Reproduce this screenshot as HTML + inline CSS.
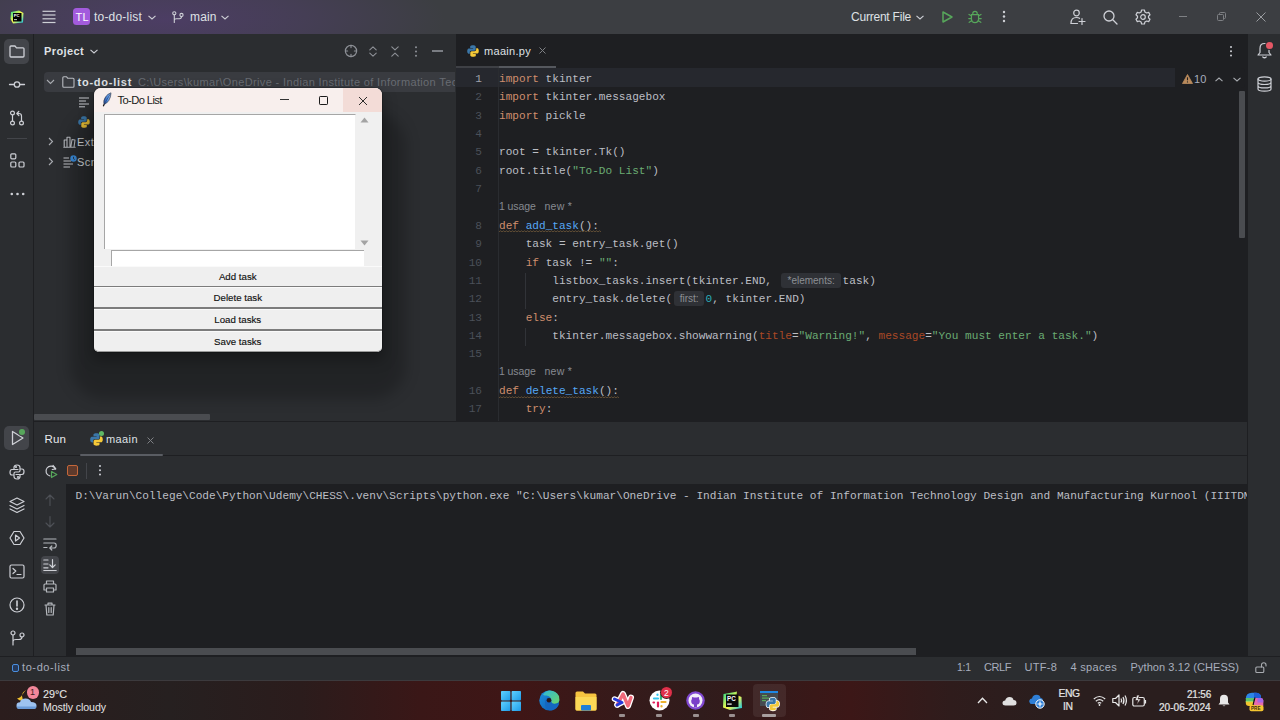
<!DOCTYPE html>
<html><head><meta charset="utf-8">
<style>
*{margin:0;padding:0;box-sizing:border-box}
html,body{width:1280px;height:720px;overflow:hidden;background:#2B2D30;font-family:"Liberation Sans",sans-serif;}
.a{position:absolute}
.t{position:absolute;white-space:pre;line-height:1}
svg{position:absolute;overflow:visible}
.ic{fill:none;stroke:#CED0D6;stroke-width:1.1;stroke-linecap:round;stroke-linejoin:round}
#titlebar{left:0;top:0;width:1280px;height:34px;background:#3C3E42}
#lstrip{left:0;top:34px;width:34px;height:622px;background:#2B2D30;border-right:1px solid #1E1F22}
#proj{left:34px;top:34px;width:422px;height:387px;background:#2B2D30}
#editor{left:456px;top:34px;width:791px;height:387px;background:#1E1F22}
#rstrip{left:1247px;top:34px;width:33px;height:622px;background:#2B2D30;border-left:1px solid #1E1F22}
#run{left:34px;top:421px;width:1213px;height:235px;background:#2B2D30;border-top:1px solid #1E1F22}
#status{left:0;top:656px;width:1280px;height:24px;background:#2B2D30;border-top:1px solid #1E1F22}
#taskbar{left:0;top:680px;width:1280px;height:40px;background:linear-gradient(90deg,#2B1D1D 0px,#262020 170px,#2B1C1C 300px,#3A1717 420px,#3F1616 520px,#361A1A 620px,#301C1C 700px,#361919 780px,#3C1717 850px,#2F1C1C 950px,#2A1E1E 1050px,#2A1E1E 1280px)}
.code{position:absolute;left:499px;font-family:"Liberation Mono",monospace;font-size:11.1px;line-height:1;color:#BCBEC4;white-space:pre}
.kw{color:#CF8E6D}.str{color:#6AAB73}.fn{color:#56A8F5}.num{color:#2AACB8}.arg{color:#AA4926}
.ln{position:absolute;font-family:"Liberation Mono",monospace;font-size:11.1px;line-height:1;color:#4B5059;text-align:right;width:40px;left:442px}
.lens{position:absolute;left:499px;font-size:10.5px;line-height:1;color:#868A91;white-space:pre}
.hint{display:inline-block;font-family:"Liberation Sans",sans-serif;font-size:10px;color:#8C8F94;background:#2F3136;border-radius:3px;text-align:center;vertical-align:top;height:15px;line-height:15px;position:relative;top:-3px}
.ui{color:#DFE1E5}
.btn{position:absolute;left:94px;width:287.5px;background:#EFEFEF;font-size:9.7px;color:#111;-webkit-text-stroke:0.15px #111;text-align:center;line-height:20px;border-top:1px solid #FAFAFA}
.tb{position:absolute;font-size:10.5px;color:#E4E4E4;white-space:pre;line-height:1;-webkit-text-stroke:0.2px #E4E4E4}
</style></head><body>
<div id="titlebar" class="a"></div>
<div class="a" style="left:0;top:0;width:600px;height:34px;background:radial-gradient(ellipse 280px 70px at 165px 20px,rgba(100,60,150,0.40) 0%,rgba(95,62,140,0.26) 50%,rgba(60,63,65,0) 100%)"></div>
<div id="lstrip" class="a"></div>
<div id="proj" class="a"></div>
<div id="editor" class="a"></div>
<div id="rstrip" class="a"></div>
<div id="run" class="a"></div>
<div id="status" class="a"></div>
<div id="taskbar" class="a"></div>
<!-- ===== title bar ===== -->
<svg style="left:10px;top:10px" width="14" height="14" viewBox="0 0 14 14">
  <defs><linearGradient id="pcg" x1="0" y1="0" x2="1" y2="1"><stop offset="0" stop-color="#21D789"/><stop offset="0.5" stop-color="#FCF84A"/><stop offset="1" stop-color="#07C3F2"/></linearGradient></defs>
  <path d="M1 2 L9 0.5 L13.5 3 L13 12.5 L3 13.5 L0.5 9 Z" fill="url(#pcg)"/>
  <rect x="3" y="3" width="8.5" height="8.5" fill="#000"/>
  <text x="3.8" y="7.3" font-size="4.2" font-weight="bold" fill="#fff" font-family="Liberation Sans">PC</text>
  <rect x="4" y="9.3" width="3" height="0.8" fill="#fff"/>
</svg>
<svg style="left:42px;top:10px" width="14" height="14" viewBox="0 0 14 14"><g stroke="#CED0D6" stroke-width="1.2"><line x1="0.5" y1="1.3" x2="13.5" y2="1.3"/><line x1="0.5" y1="5" x2="13.5" y2="5"/><line x1="0.5" y1="8.8" x2="13.5" y2="8.8"/><line x1="0.5" y1="12.5" x2="13.5" y2="12.5"/></g></svg>
<div class="a" style="left:73px;top:8px;width:17px;height:17px;background:#A35BDD;border-radius:3.5px"></div>
<div class="t" style="left:75.5px;top:12px;font-size:11px;color:#fff;letter-spacing:0.2px">TL</div>
<div class="t ui" style="left:94px;top:11.3px;font-size:12px;letter-spacing:0.2px">to-do-list</div>
<svg style="left:148px;top:15px" width="8" height="5" viewBox="0 0 8 5"><path d="M0.5 0.8 L4 4 L7.5 0.8" fill="none" stroke="#CED0D6" stroke-width="1.1"/></svg>
<svg style="left:172px;top:11px" width="12" height="12" viewBox="0 0 12 12" class="ic"><circle cx="2.3" cy="2.3" r="1.6"/><circle cx="9.5" cy="4" r="1.6"/><path d="M2.3 3.9 V11.5 M2.3 9 Q2.3 7.8 4.3 7.8 L7.5 7.8 Q9.5 7.8 9.5 5.6"/></svg>
<div class="t ui" style="left:190px;top:11.3px;font-size:12px;letter-spacing:0.15px">main</div>
<svg style="left:221px;top:15px" width="8" height="5" viewBox="0 0 8 5"><path d="M0.5 0.8 L4 4 L7.5 0.8" fill="none" stroke="#CED0D6" stroke-width="1.1"/></svg>

<div class="t ui" style="left:851px;top:11.3px;font-size:12px;letter-spacing:-0.22px">Current File</div>
<svg style="left:916px;top:15px" width="8" height="5" viewBox="0 0 8 5"><path d="M0.5 0.8 L4 4 L7.5 0.8" fill="none" stroke="#CED0D6" stroke-width="1.1"/></svg>
<svg style="left:942px;top:11px" width="11" height="12" viewBox="0 0 11 12"><path d="M1 1 L10 6 L1 11 Z" fill="none" stroke="#57A65B" stroke-width="1.5" stroke-linejoin="round"/></svg>
<svg style="left:968px;top:10px" width="14" height="14" viewBox="0 0 14 14"><g fill="none" stroke="#57A65B" stroke-width="1.25" stroke-linecap="round"><path d="M4.8 3.5 Q4.8 1.3 7 1.3 Q9.2 1.3 9.2 3.5"/><path d="M3.6 4.5 H10.4 Q10.6 6 10.6 8.5 Q10.6 12.6 7 12.6 Q3.4 12.6 3.4 8.5 Q3.4 6 3.6 4.5 Z"/><path d="M1 4.5 L3.4 5.8 M13 4.5 L10.6 5.8 M0.8 8.5 H3.3 M13.2 8.5 H10.7 M1.2 12.3 L3.6 10.8 M12.8 12.3 L10.4 10.8"/></g></svg>
<svg style="left:1002px;top:10px" width="4" height="14" viewBox="0 0 4 14"><g fill="#CED0D6"><circle cx="2" cy="2" r="1.2"/><circle cx="2" cy="6.5" r="1.2"/><circle cx="2" cy="11" r="1.2"/></g></svg>
<svg width="16" height="16" viewBox="0 0 16 16" class="ic" style="left:1070px;top:9px;stroke-width:1.2"><circle cx="6.5" cy="4" r="2.8"/><path d="M1 14.5 Q1 8.5 6.5 8.5 Q8.5 8.5 9.5 9.3 M0.8 14.5 H7.5 M12 9.5 V15.5 M9 12.5 H15"/></svg>
<svg width="15" height="15" viewBox="0 0 15 15" class="ic" style="left:1103px;top:10px;stroke-width:1.3"><circle cx="6" cy="6" r="5"/><path d="M9.8 9.8 L14 14"/></svg>
<svg width="16" height="16" viewBox="0 0 16 16" class="ic" style="left:1135px;top:9px;stroke-width:1.2"><path d="M6.6 1 H9.4 L9.9 3 L11.7 4 L13.7 3.4 L15 5.8 L13.5 7.2 V8.8 L15 10.2 L13.7 12.6 L11.7 12 L9.9 13 L9.4 15 H6.6 L6.1 13 L4.3 12 L2.3 12.6 L1 10.2 L2.5 8.8 V7.2 L1 5.8 L2.3 3.4 L4.3 4 L6.1 3 Z"/><circle cx="8" cy="8" r="2.3"/></svg>
<div class="a" style="left:1179px;top:16px;width:8px;height:1px;background:#7E8084"></div>
<svg style="left:1217px;top:12px" width="9" height="9" viewBox="0 0 9 9"><g fill="none" stroke="#7E8084" stroke-width="1"><rect x="0.5" y="2.5" width="6" height="6" rx="1"/><path d="M2.5 2.5 V1.5 Q2.5 0.5 3.5 0.5 H7.5 Q8.5 0.5 8.5 1.5 V5.5 Q8.5 6.5 7.5 6.5 H6.5"/></g></svg>
<svg style="left:1256px;top:12px" width="10" height="10" viewBox="0 0 10 10"><path d="M0.5 0.5 L9.5 9.5 M9.5 0.5 L0.5 9.5" stroke="#9A9CA0" stroke-width="1"/></svg>
<!-- ===== left strip ===== -->
<div class="a" style="left:4px;top:39px;width:25px;height:25px;background:#43454A;border-radius:5px"></div>
<svg width="16" height="13" viewBox="0 0 16 13" class="ic" style="left:9px;top:45px;stroke-width:1.3"><path d="M1 2 Q1 1 2 1 H6 L7.5 2.8 H14 Q15 2.8 15 3.8 V11 Q15 12 14 12 H2 Q1 12 1 11 Z"/></svg>
<svg width="16" height="9" viewBox="0 0 16 9" class="ic" style="left:9px;top:80px;stroke-width:1.3"><circle cx="8" cy="4.5" r="2.7"/><path d="M0.5 4.5 H5.3 M10.7 4.5 H15.5"/></svg>
<svg width="16" height="16" viewBox="0 0 16 16" class="ic" style="left:9px;top:110px;stroke-width:1.2"><circle cx="3.5" cy="3" r="1.9"/><circle cx="3.5" cy="13" r="1.9"/><circle cx="12.5" cy="13" r="1.9"/><path d="M3.5 5 V11 M12.5 11 V6 Q12.5 3.5 10 3.5 H8 M9.8 1.5 L7.8 3.5 L9.8 5.5"/></svg>
<div class="a" style="left:7px;top:138px;width:20px;height:1px;background:#43454A"></div>
<svg width="15" height="15" viewBox="0 0 15 15" class="ic" style="left:10px;top:153px;stroke-width:1.2"><rect x="0.8" y="0.8" width="5" height="5" rx="1"/><rect x="0.8" y="9" width="5" height="5" rx="1"/><rect x="9" y="9" width="5" height="5" rx="1"/></svg>
<svg style="left:10px;top:192px" width="15" height="4" viewBox="0 0 15 4"><g fill="#CED0D6"><circle cx="1.8" cy="2" r="1.3"/><circle cx="7.5" cy="2" r="1.3"/><circle cx="13.2" cy="2" r="1.3"/></g></svg>

<div class="a" style="left:4px;top:426px;width:25px;height:24px;background:#43454A;border-radius:5px"></div>
<svg style="left:11px;top:430px" width="14" height="16" viewBox="0 0 14 16"><path d="M1.5 1.5 L12 8 L1.5 14.5 Z" fill="none" stroke="#CED0D6" stroke-width="1.3" stroke-linejoin="round"/></svg>
<div class="a" style="left:19px;top:429px;width:6px;height:6px;background:#57A65B;border-radius:50%;box-shadow:0 0 0 1px #43454A"></div>
<svg width="16" height="16" viewBox="0 0 16 16" class="ic" style="left:9px;top:464px;stroke-width:1.2"><path d="M8 1 Q5 1 5 3.5 V5.5 H9 M5 5.5 H3 Q1 5.5 1 8.5 Q1 11 3 11 H5 V9.5 Q5 8 6.5 8 H9.5 Q11 8 11 6.5 V3.5 Q11 1 8 1 M11 5 H13 Q15 5 15 7.5 Q15 10.5 13 10.5 H11 M7 10.5 H11 V12.5 Q11 15 8 15 Q5 15 5 12.5 V11"/><circle cx="7" cy="3" r="0.5"/><circle cx="9" cy="13" r="0.5"/></svg>
<svg width="16" height="17" viewBox="0 0 16 17" class="ic" style="left:9px;top:497px;stroke-width:1.2"><path d="M8 1 L15 4.5 L8 8 L1 4.5 Z M1 8.5 L8 12 L15 8.5 M1 12 L8 15.5 L15 12"/></svg>
<svg width="16" height="16" viewBox="0 0 16 16" class="ic" style="left:9px;top:530px;stroke-width:1.2"><path d="M5 1.5 H11 L15 8 L11 14.5 H5 L1 8 Z"/><path d="M6.5 5 L10.5 8 L6.5 11 Z"/></svg>
<svg width="16" height="15" viewBox="0 0 16 15" class="ic" style="left:9px;top:564px;stroke-width:1.2"><rect x="1" y="1" width="14" height="13" rx="1.5"/><path d="M4 4.5 L6.8 7 L4 9.5 M8 10.5 H12"/></svg>
<svg width="16" height="16" viewBox="0 0 16 16" class="ic" style="left:9px;top:597px;stroke-width:1.2"><circle cx="8" cy="8" r="7"/><path d="M8 4 V9" stroke-width="1.6"/><circle cx="8" cy="11.8" r="0.6" fill="#CED0D6"/></svg>
<svg width="15" height="16" viewBox="0 0 15 16" class="ic" style="left:10px;top:630px;stroke-width:1.2"><circle cx="3" cy="3" r="2"/><circle cx="12" cy="5" r="2"/><path d="M3 5 V15 M3 11.5 Q3 9.5 6 9.5 H9 Q12 9.5 12 7"/></svg>

<!-- ===== right strip ===== -->
<svg width="15" height="17" viewBox="0 0 15 17" class="ic" style="left:1257px;top:42px;stroke-width:1.2"><path d="M7.5 1.5 Q3 1.5 3 6.5 V10.5 L1 13 H14 L12 10.5 V6.5 Q12 1.5 7.5 1.5 M5.8 15 Q7.5 16.5 9.2 15"/></svg>
<div class="a" style="left:1266px;top:42px;width:7px;height:7px;background:#E55765;border-radius:50%;box-shadow:0 0 0 1px #2B2D30"></div>
<svg width="15" height="16" viewBox="0 0 15 16" class="ic" style="left:1257px;top:76px;stroke-width:1.2"><ellipse cx="7.5" cy="3" rx="6.5" ry="2.2"/><path d="M1 3 V13 Q1 15.2 7.5 15.2 Q14 15.2 14 13 V3 M1 6.3 Q1 8.5 7.5 8.5 Q14 8.5 14 6.3 M1 9.7 Q1 11.9 7.5 11.9 Q14 11.9 14 9.7"/></svg>

<!-- ===== project panel ===== -->
<div class="t ui" style="left:44px;top:46px;font-size:11px;font-weight:bold;letter-spacing:0.4px">Project</div>
<svg style="left:90px;top:49px" width="8" height="5" viewBox="0 0 8 5"><path d="M0.5 0.8 L4 4 L7.5 0.8" fill="none" stroke="#CED0D6" stroke-width="1.1"/></svg>
<svg width="14" height="14" viewBox="0 0 14 14" class="ic" style="left:344px;top:44px;stroke:#8E9197;stroke-width:1.2"><circle cx="7" cy="7" r="5.6"/><path d="M7 1.4 V3.6 M7 10.4 V12.6 M1.4 7 H3.6 M10.4 7 H12.6"/></svg>
<svg width="8" height="11" viewBox="0 0 8 11" class="ic" style="left:369px;top:45.5px;stroke:#8E9197"><path d="M0.8 3.8 L4 0.8 L7.2 3.8 M0.8 7.2 L4 10.2 L7.2 7.2"/></svg>
<svg width="8" height="11" viewBox="0 0 8 11" class="ic" style="left:391px;top:45.5px;stroke:#8E9197"><path d="M0.8 0.8 L4 3.8 L7.2 0.8 M0.8 10.2 L4 7.2 L7.2 10.2"/></svg>
<svg style="left:414px;top:46px" width="4" height="11" viewBox="0 0 4 11"><g fill="#8E9197"><circle cx="2" cy="1.3" r="1"/><circle cx="2" cy="5.5" r="1"/><circle cx="2" cy="9.7" r="1"/></g></svg>
<div class="a" style="left:432px;top:50px;width:11px;height:1.6px;background:#7A7D83"></div>

<div class="a" style="left:44px;top:72px;width:411px;height:20px;background:#393B40;border-radius:4px 0 0 4px"></div>
<svg style="left:46px;top:79px" width="9" height="6" viewBox="0 0 9 6"><path d="M1 1 L4.5 4.5 L8 1" fill="none" stroke="#A8ABB0" stroke-width="1.1"/></svg>
<svg width="13" height="12" viewBox="0 0 13 12" class="ic" style="left:62px;top:76px;stroke:#B8BBC0;stroke-width:1.1"><path d="M0.8 1.8 Q0.8 0.8 1.8 0.8 H4.6 L5.8 2.3 H11 Q12 2.3 12 3.3 V10.2 Q12 11.2 11 11.2 H1.8 Q0.8 11.2 0.8 10.2 Z"/></svg>
<div class="t ui" style="left:77.5px;top:77px;font-size:11px;font-weight:bold;letter-spacing:0.75px">to-do-list</div>
<div class="a" style="left:138px;top:72px;width:317px;height:20px;overflow:hidden"><div class="t" style="left:0;top:5px;font-size:11px;color:#686B72;letter-spacing:0.36px">C:\Users\kumar\OneDrive - Indian Institute of Information Technology Design</div></div>

<svg style="left:79px;top:97px" width="10" height="10" viewBox="0 0 10 10"><g stroke="#B8BBC0" stroke-width="1.1"><line x1="0" y1="1" x2="10" y2="1"/><line x1="0" y1="4" x2="7" y2="4"/><line x1="0" y1="7" x2="10" y2="7"/><line x1="0" y1="9.8" x2="6" y2="9.8"/></g></svg>
<svg style="left:78px;top:116px" width="12" height="12" viewBox="0 0 12 12"><path d="M6 0.3 C3 0.3 3.2 1.6 3.2 1.6 V3 H6.1 V3.5 H2 C2 3.5 0.2 3.3 0.2 6.1 C0.2 8.9 1.8 8.8 1.8 8.8 H2.8 V7.4 C2.8 7.4 2.7 5.8 4.3 5.8 H7.1 C7.1 5.8 8.7 5.8 8.7 4.3 V1.8 C8.7 1.8 8.9 0.3 6 0.3 Z" fill="#3B77A8"/><path d="M6 11.7 C9 11.7 8.8 10.4 8.8 10.4 V9 H5.9 V8.5 H10 C10 8.5 11.8 8.7 11.8 5.9 C11.8 3.1 10.2 3.2 10.2 3.2 H9.2 V4.6 C9.2 4.6 9.3 6.2 7.7 6.2 H4.9 C4.9 6.2 3.3 6.2 3.3 7.7 V10.2 C3.3 10.2 3.1 11.7 6 11.7 Z" fill="#F5C938"/></svg>

<svg style="left:48px;top:137px" width="6" height="9" viewBox="0 0 6 9"><path d="M1 1 L4.5 4.5 L1 8" fill="none" stroke="#A8ABB0" stroke-width="1.1"/></svg>
<svg width="13" height="12" viewBox="0 0 13 12" class="ic" style="left:63px;top:136px;stroke:#B8BBC0;stroke-width:1.1"><path d="M0.8 11.2 H12.2 M1.2 11.2 V4 H4 V11.2 M4 11.2 V1.2 H7 V11.2 M7.8 11.2 L9 3.5 L12 4 L11 11.2"/></svg>
<div class="t ui" style="left:77px;top:137px;font-size:11px;letter-spacing:0.4px">External Libraries</div>
<svg style="left:48px;top:157px" width="6" height="9" viewBox="0 0 6 9"><path d="M1 1 L4.5 4.5 L1 8" fill="none" stroke="#A8ABB0" stroke-width="1.1"/></svg>
<svg style="left:63px;top:155px" width="14" height="13" viewBox="0 0 14 13"><g stroke="#B8BBC0" stroke-width="1.1"><line x1="0.5" y1="3" x2="6" y2="3"/><line x1="0.5" y1="6" x2="8" y2="6"/><line x1="0.5" y1="9" x2="10" y2="9"/><line x1="0.5" y1="12" x2="7" y2="12"/></g><circle cx="10.5" cy="3.5" r="3.2" fill="#3B8FE0"/><path d="M10.5 1.8 V3.7 L11.7 4.5" stroke="#2B2D30" stroke-width="0.9" fill="none"/></svg>
<div class="t ui" style="left:77px;top:157px;font-size:11px;letter-spacing:0.4px">Scratches and Consoles</div>
<div class="a" style="left:34px;top:414px;width:176px;height:6px;background:#4A4C50;border-radius:1px"></div>
<!-- ===== editor ===== -->
<svg style="left:467px;top:45px" width="12" height="12" viewBox="0 0 12 12"><path d="M6 0.3 C3 0.3 3.2 1.6 3.2 1.6 V3 H6.1 V3.5 H2 C2 3.5 0.2 3.3 0.2 6.1 C0.2 8.9 1.8 8.8 1.8 8.8 H2.8 V7.4 C2.8 7.4 2.7 5.8 4.3 5.8 H7.1 C7.1 5.8 8.7 5.8 8.7 4.3 V1.8 C8.7 1.8 8.9 0.3 6 0.3 Z" fill="#3B77A8"/><path d="M6 11.7 C9 11.7 8.8 10.4 8.8 10.4 V9 H5.9 V8.5 H10 C10 8.5 11.8 8.7 11.8 5.9 C11.8 3.1 10.2 3.2 10.2 3.2 H9.2 V4.6 C9.2 4.6 9.3 6.2 7.7 6.2 H4.9 C4.9 6.2 3.3 6.2 3.3 7.7 V10.2 C3.3 10.2 3.1 11.7 6 11.7 Z" fill="#F5C938"/></svg>
<div class="t ui" style="left:484px;top:46px;font-size:11px;letter-spacing:0.3px">maain.py</div>
<svg style="left:539px;top:47px" width="7" height="7" viewBox="0 0 7 7"><path d="M0.5 0.5 L6.5 6.5 M6.5 0.5 L0.5 6.5" stroke="#7E8084" stroke-width="1"/></svg>
<svg style="left:1229px;top:46px" width="4" height="11" viewBox="0 0 4 11"><g fill="#CED0D6"><circle cx="2" cy="1" r="1"/><circle cx="2" cy="5.3" r="1"/><circle cx="2" cy="9.6" r="1"/></g></svg>
<div class="a" style="left:456px;top:65.5px;width:43px;height:2.5px;background:#3E4045"></div><div class="a" style="left:499px;top:65.5px;width:57px;height:2.5px;background:#55585E"></div>
<div class="a" style="left:456px;top:68px;width:719px;height:19px;background:#26282E"></div>
<div class="a" style="left:497.5px;top:68px;width:1px;height:353px;background:#2A2C30"></div>
<div class="a" style="left:525px;top:272.8px;width:1px;height:36.7px;background:#313338"></div>
<div class="a" style="left:525px;top:327.9px;width:1px;height:18.4px;background:#313338"></div>

<div class="ln" style="top:74.00px;color:#A1A3AB">1</div>
<div class="code" style="top:74.00px"><span class="kw">import</span> tkinter</div>
<div class="ln" style="top:92.36px">2</div>
<div class="code" style="top:92.36px"><span class="kw">import</span> tkinter.messagebox</div>
<div class="ln" style="top:110.72px">3</div>
<div class="code" style="top:110.72px"><span class="kw">import</span> pickle</div>
<div class="ln" style="top:129.08px">4</div>
<div class="ln" style="top:147.44px">5</div>
<div class="code" style="top:147.44px">root = tkinter.Tk()</div>
<div class="ln" style="top:165.80px">6</div>
<div class="code" style="top:165.80px">root.title(<span class="str">"To-Do List"</span>)</div>
<div class="ln" style="top:184.16px">7</div>
<div class="ln" style="top:220.88px">8</div>
<div class="code" style="top:220.88px"><span class="kw">def</span> <span class="fn">add_task</span>():</div>
<div class="ln" style="top:239.24px">9</div>
<div class="code" style="top:239.24px">    task = entry_task.get()</div>
<div class="ln" style="top:257.60px">10</div>
<div class="code" style="top:257.60px">    <span class="kw">if</span> task != <span class="str">""</span>:</div>
<div class="ln" style="top:275.96px">11</div>
<div class="code" style="top:275.96px">        listbox_tasks.insert(tkinter.END, <span class="hint" style="width:60px;margin-left:2.5px;margin-right:1.5px">*elements:</span>task)</div>
<div class="ln" style="top:294.32px">12</div>
<div class="code" style="top:294.32px">        entry_task.delete(<span class="hint" style="width:30px;margin-left:2px;margin-right:1.5px">first:</span><span class="num">0</span>, tkinter.END)</div>
<div class="ln" style="top:312.68px">13</div>
<div class="code" style="top:312.68px">    <span class="kw">else</span>:</div>
<div class="ln" style="top:331.04px">14</div>
<div class="code" style="top:331.04px">        tkinter.messagebox.showwarning(<span class="arg">title</span>=<span class="str">"Warning!"</span>, <span class="arg">message</span>=<span class="str">"You must enter a task."</span>)</div>
<div class="ln" style="top:349.40px">15</div>
<div class="ln" style="top:386.12px">16</div>
<div class="code" style="top:386.12px"><span class="kw">def</span> <span class="fn">delete_task</span>():</div>
<div class="ln" style="top:404.48px">17</div>
<div class="code" style="top:404.48px">    <span class="kw">try</span>:</div>
<div class="lens" style="top:201.02px"><span style="letter-spacing:-0.1px">1 usage</span>   <span style="letter-spacing:0.3px">new *</span></div>
<div class="lens" style="top:366.26px"><span style="letter-spacing:-0.1px">1 usage</span>   <span style="letter-spacing:0.3px">new *</span></div>
<svg style="left:499px;top:230.38px" width="100" height="3" viewBox="0 0 100 3"><path d="M0 1.8 L1.5 0.8 L3 1.8 M3 1.8 L4.5 0.8 L6 1.8 M6 1.8 L7.5 0.8 L9 1.8 M9 1.8 L10.5 0.8 L12 1.8 M12 1.8 L13.5 0.8 L15 1.8 M15 1.8 L16.5 0.8 L18 1.8 M18 1.8 L19.5 0.8 L21 1.8 M21 1.8 L22.5 0.8 L24 1.8 M24 1.8 L25.5 0.8 L27 1.8 M27 1.8 L28.5 0.8 L30 1.8 M30 1.8 L31.5 0.8 L33 1.8 M33 1.8 L34.5 0.8 L36 1.8 M36 1.8 L37.5 0.8 L39 1.8 M39 1.8 L40.5 0.8 L42 1.8 M42 1.8 L43.5 0.8 L45 1.8 M45 1.8 L46.5 0.8 L48 1.8 M48 1.8 L49.5 0.8 L51 1.8 M51 1.8 L52.5 0.8 L54 1.8 M54 1.8 L55.5 0.8 L57 1.8 M57 1.8 L58.5 0.8 L60 1.8 M60 1.8 L61.5 0.8 L63 1.8 M63 1.8 L64.5 0.8 L66 1.8 M66 1.8 L67.5 0.8 L69 1.8 M69 1.8 L70.5 0.8 L72 1.8 M72 1.8 L73.5 0.8 L75 1.8 M75 1.8 L76.5 0.8 L78 1.8 M78 1.8 L79.5 0.8 L81 1.8 M81 1.8 L82.5 0.8 L84 1.8 M84 1.8 L85.5 0.8 L87 1.8 M87 1.8 L88.5 0.8 L90 1.8 M90 1.8 L91.5 0.8 L93 1.8 M93 1.8 L94.5 0.8 L96 1.8 M96 1.8 L97.5 0.8 L99 1.8 M99 1.8 L100.5 0.8 L102 1.8 " fill="none" stroke="#7A5E3C" stroke-width="0.7"/></svg>
<svg style="left:499px;top:395.62px" width="120" height="3" viewBox="0 0 120 3"><path d="M0 1.8 L1.5 0.8 L3 1.8 M3 1.8 L4.5 0.8 L6 1.8 M6 1.8 L7.5 0.8 L9 1.8 M9 1.8 L10.5 0.8 L12 1.8 M12 1.8 L13.5 0.8 L15 1.8 M15 1.8 L16.5 0.8 L18 1.8 M18 1.8 L19.5 0.8 L21 1.8 M21 1.8 L22.5 0.8 L24 1.8 M24 1.8 L25.5 0.8 L27 1.8 M27 1.8 L28.5 0.8 L30 1.8 M30 1.8 L31.5 0.8 L33 1.8 M33 1.8 L34.5 0.8 L36 1.8 M36 1.8 L37.5 0.8 L39 1.8 M39 1.8 L40.5 0.8 L42 1.8 M42 1.8 L43.5 0.8 L45 1.8 M45 1.8 L46.5 0.8 L48 1.8 M48 1.8 L49.5 0.8 L51 1.8 M51 1.8 L52.5 0.8 L54 1.8 M54 1.8 L55.5 0.8 L57 1.8 M57 1.8 L58.5 0.8 L60 1.8 M60 1.8 L61.5 0.8 L63 1.8 M63 1.8 L64.5 0.8 L66 1.8 M66 1.8 L67.5 0.8 L69 1.8 M69 1.8 L70.5 0.8 L72 1.8 M72 1.8 L73.5 0.8 L75 1.8 M75 1.8 L76.5 0.8 L78 1.8 M78 1.8 L79.5 0.8 L81 1.8 M81 1.8 L82.5 0.8 L84 1.8 M84 1.8 L85.5 0.8 L87 1.8 M87 1.8 L88.5 0.8 L90 1.8 M90 1.8 L91.5 0.8 L93 1.8 M93 1.8 L94.5 0.8 L96 1.8 M96 1.8 L97.5 0.8 L99 1.8 M99 1.8 L100.5 0.8 L102 1.8 M102 1.8 L103.5 0.8 L105 1.8 M105 1.8 L106.5 0.8 L108 1.8 M108 1.8 L109.5 0.8 L111 1.8 M111 1.8 L112.5 0.8 L114 1.8 M114 1.8 L115.5 0.8 L117 1.8 M117 1.8 L118.5 0.8 L120 1.8 " fill="none" stroke="#7A5E3C" stroke-width="0.7"/></svg>
<div class="a" style="left:1175px;top:68px;width:70px;height:20px;background:#1E1F22;border-radius:0 4px 4px 0"></div>
<svg style="left:1182px;top:74px" width="11" height="10" viewBox="0 0 11 10"><path d="M5.5 0.5 L10.5 9.5 H0.5 Z" fill="#B98A5C" stroke="#B98A5C" stroke-width="0.8" stroke-linejoin="round"/><path d="M5.5 3.3 V6.3" stroke="#1E1F22" stroke-width="1.1"/><circle cx="5.5" cy="7.9" r="0.6" fill="#1E1F22"/></svg>
<div class="t" style="left:1194px;top:74px;font-size:11px;color:#A8ADBD;letter-spacing:0.2px">10</div>
<svg style="left:1215px;top:77px" width="8" height="5" viewBox="0 0 8 5"><path d="M0.5 4.2 L4 1 L7.5 4.2" fill="none" stroke="#A8ABB0" stroke-width="1.1"/></svg>
<svg style="left:1233px;top:77px" width="8" height="5" viewBox="0 0 8 5"><path d="M0.5 0.8 L4 4 L7.5 0.8" fill="none" stroke="#A8ABB0" stroke-width="1.1"/></svg>
<div class="a" style="left:1238.5px;top:90.5px;width:6.5px;height:147.5px;background:#4A4C50;border-radius:1px"></div>
<!-- ===== run panel ===== -->
<div class="t ui" style="left:44.5px;top:433.5px;font-size:11.5px;color:#E8EAED;letter-spacing:0.2px">Run</div>
<svg style="left:90px;top:433px" width="13" height="13" viewBox="0 0 12 12"><path d="M6 0.3 C3 0.3 3.2 1.6 3.2 1.6 V3 H6.1 V3.5 H2 C2 3.5 0.2 3.3 0.2 6.1 C0.2 8.9 1.8 8.8 1.8 8.8 H2.8 V7.4 C2.8 7.4 2.7 5.8 4.3 5.8 H7.1 C7.1 5.8 8.7 5.8 8.7 4.3 V1.8 C8.7 1.8 8.9 0.3 6 0.3 Z" fill="#3B77A8"/><path d="M6 11.7 C9 11.7 8.8 10.4 8.8 10.4 V9 H5.9 V8.5 H10 C10 8.5 11.8 8.7 11.8 5.9 C11.8 3.1 10.2 3.2 10.2 3.2 H9.2 V4.6 C9.2 4.6 9.3 6.2 7.7 6.2 H4.9 C4.9 6.2 3.3 6.2 3.3 7.7 V10.2 C3.3 10.2 3.1 11.7 6 11.7 Z" fill="#F5C938"/></svg>
<div class="a" style="left:98.5px;top:431px;width:5px;height:5px;background:#5FB865;border-radius:50%"></div>
<div class="t ui" style="left:106px;top:434.3px;font-size:11px;letter-spacing:0.4px">maain</div>
<svg style="left:147px;top:437px" width="7" height="7" viewBox="0 0 7 7"><path d="M0.5 0.5 L6.5 6.5 M6.5 0.5 L0.5 6.5" stroke="#7E8084" stroke-width="1"/></svg>
<div class="a" style="left:34px;top:455px;width:1213px;height:1px;background:#1E1F22"></div>
<div class="a" style="left:80px;top:453.8px;width:83px;height:2.3px;background:#5A5D63;border-radius:1px"></div>
<svg style="left:44px;top:464px" width="14" height="14" viewBox="0 0 14 14"><path d="M11.5 5 A5 5 0 1 0 6 12" fill="none" stroke="#CED0D6" stroke-width="1.2" stroke-linecap="round"/><path d="M9 1.5 L11.8 4.8 L8.2 5.5" fill="none" stroke="#CED0D6" stroke-width="1.2" stroke-linecap="round" stroke-linejoin="round"/><path d="M7.5 7.5 L12.8 10.5 L7.5 13.5 Z" fill="none" stroke="#57A65B" stroke-width="1.2" stroke-linejoin="round"/></svg>
<div class="a" style="left:67.3px;top:465px;width:10.5px;height:10.5px;border:1.4px solid #C4673A;background:#5E3A2C;border-radius:2px"></div>
<div class="a" style="left:86px;top:463px;width:1px;height:16px;background:#43454A"></div>
<svg style="left:98px;top:465px" width="4" height="11" viewBox="0 0 4 11"><g fill="#CED0D6"><circle cx="2" cy="1" r="1"/><circle cx="2" cy="5.3" r="1"/><circle cx="2" cy="9.6" r="1"/></g></svg>

<div class="a" style="left:66px;top:484px;width:1181px;height:172px;background:#1E1F22"></div>
<div class="a" style="left:34px;top:484px;width:32px;height:172px;background:#2B2D30"></div>
<svg width="10" height="12" viewBox="0 0 10 12" class="ic" style="left:45px;top:494px;stroke:#4E5157;stroke-width:1.1"><path d="M5 11.5 V1 M1 5 L5 1 L9 5"/></svg>
<svg width="10" height="12" viewBox="0 0 10 12" class="ic" style="left:45px;top:516px;stroke:#4E5157;stroke-width:1.1"><path d="M5 0.5 V11 M1 7 L5 11 L9 7"/></svg>
<svg width="14" height="12" viewBox="0 0 14 12" class="ic" style="left:43px;top:538px;stroke-width:1.2;stroke:#B4B7BC"><path d="M0.8 1 H13 M0.8 5 H11 Q13.2 5 13.2 7.5 Q13.2 10 11 10 H7 M8.8 8 L6.8 10 L8.8 12 M0.8 9.5 H4"/></svg>
<div class="a" style="left:41px;top:556px;width:18px;height:18px;background:#43454A;border-radius:4px"></div>
<svg width="14" height="12" viewBox="0 0 14 12" class="ic" style="left:43px;top:559px;stroke-width:1.2"><path d="M0.8 1 H5 M0.8 5 H5 M0.8 8.8 H5 M0.8 11.5 H13.2 M9.5 0.5 V8.5 M6.8 5.8 L9.5 8.5 L12.2 5.8"/></svg>
<svg width="14" height="13" viewBox="0 0 14 13" class="ic" style="left:43px;top:580px;stroke-width:1.2;stroke:#B4B7BC"><path d="M3.5 4 V1 H10.5 V4 M3 10 H1 V5 Q1 4 2 4 H12 Q13 4 13 5 V10 H11 M3.5 8 H10.5 V12 H3.5 Z"/></svg>
<svg width="12" height="14" viewBox="0 0 12 14" class="ic" style="left:44px;top:602px;stroke-width:1.2;stroke:#B4B7BC"><path d="M1 3 H11 M4 3 V1.2 H8 V3 M2 3 L2.8 13 H9.2 L10 3 M4.8 5.5 V10.5 M7.2 5.5 V10.5"/></svg>

<div class="t" style="left:75.5px;top:491px;font-family:'Liberation Mono',monospace;font-size:11.13px;color:#BCBEC4">D:\Varun\College\Code\Python\Udemy\CHESS\.venv\Scripts\python.exe "C:\Users\kumar\OneDrive - Indian Institute of Information Technology Design and Manufacturing Kurnool (IIITDM</div>
<div class="a" style="left:1247px;top:456px;width:33px;height:200px;background:#2B2D30"></div>
<div class="a" style="left:1247px;top:34px;width:1px;height:622px;background:#1E1F22"></div>
<div class="a" style="left:76px;top:648px;width:840px;height:7px;background:#4A4C50"></div>

<!-- ===== status bar ===== -->
<div class="a" style="left:12px;top:664px;width:7px;height:7.5px;border:1.4px solid #4A8FE0;background:#25395A;border-radius:2px"></div>
<div class="t" style="left:22px;top:662px;font-size:11px;color:#A8ADBD;letter-spacing:0.6px">to-do-list</div>
<div class="t" style="left:957px;top:662px;font-size:10.5px;color:#A8ADBD;letter-spacing:-0.3px">1:1</div>
<div class="t" style="left:984px;top:662px;font-size:11px;color:#A8ADBD;letter-spacing:-0.4px">CRLF</div>
<div class="t" style="left:1024.5px;top:662px;font-size:11px;color:#A8ADBD;letter-spacing:0.3px">UTF-8</div>
<div class="t" style="left:1070.5px;top:662px;font-size:11px;color:#A8ADBD;letter-spacing:0.3px">4 spaces</div>
<div class="t" style="left:1130.5px;top:662px;font-size:11px;color:#A8ADBD;letter-spacing:0.08px">Python 3.12 (CHESS)</div>
<svg width="12" height="11" viewBox="0 0 12 11" class="ic" style="left:1255px;top:662px;stroke:#A8ABB0;stroke-width:1.1"><rect x="0.8" y="5" width="8" height="5.5" rx="1"/><path d="M6.5 5 V3 Q6.5 0.8 8.8 0.8 Q11 0.8 11 3 V4"/></svg>
<!-- ===== taskbar ===== -->
<div class="a" style="left:0;top:680px;width:1280px;height:1px;background:#3C3A3D"></div>
<svg style="left:14px;top:688px" width="26" height="24" viewBox="0 0 26 24">
  <path d="M12 2 Q8 4 8 8 Q8 11 10.5 12.5 Q6 13.5 3 10.5 Q6.5 10 8.5 6.5 Q10 4 12 2 Z" fill="#F2C230"/>
  <path d="M6 21 Q2.5 21 2.5 17.5 Q2.5 14.2 6 14.2 Q7 10.5 11.5 10.5 Q16 10.5 17 14 Q22.5 14 22.5 17.5 Q22.5 21 19 21 Z" fill="#9EC3F0"/>
  <path d="M6 21 Q2.5 21 2.5 18.5 L22.5 18.5 Q22.5 21 19 21 Z" fill="#6B9BD8"/>
</svg>
<div class="a" style="left:26.5px;top:686px;width:12px;height:12.5px;background:#F3879A;border-radius:50%"></div>
<div class="t" style="left:30px;top:688px;font-size:9px;color:#3a2020">1</div>
<div class="tb" style="left:43px;top:688.5px;font-size:10.8px;-webkit-text-stroke:0.1px #E4E4E4">29°C</div>
<div class="tb" style="left:43px;top:702px;font-size:10.6px;letter-spacing:-0.1px;-webkit-text-stroke:0px">Mostly cloudy</div>

<!-- windows logo -->
<svg style="left:501px;top:691px" width="20" height="20" viewBox="0 0 20 20"><defs><linearGradient id="wg" x1="0" y1="0" x2="1" y2="1"><stop offset="0" stop-color="#5FD0FF"/><stop offset="1" stop-color="#1E9BE8"/></linearGradient></defs><g fill="url(#wg)"><rect x="0" y="0" width="9.4" height="9.4" rx="0.8"/><rect x="10.6" y="0" width="9.4" height="9.4" rx="0.8"/><rect x="0" y="10.6" width="9.4" height="9.4" rx="0.8"/><rect x="10.6" y="10.6" width="9.4" height="9.4" rx="0.8"/></g></svg>
<!-- edge -->
<svg style="left:538.5px;top:690px" width="21" height="21" viewBox="0 0 21 21"><defs><linearGradient id="eg1" x1="0" y1="0" x2="1" y2="1"><stop offset="0" stop-color="#1E8FE0"/><stop offset="1" stop-color="#0B5AAE"/></linearGradient><linearGradient id="eg2" x1="0" y1="0" x2="1" y2="1"><stop offset="0" stop-color="#2FB8D8"/><stop offset="1" stop-color="#6BD56A"/></linearGradient></defs>
<circle cx="10.3" cy="10.4" r="10" fill="url(#eg1)"/>
<path d="M4 4.5 Q7 0.3 11 0.4 Q17 0.6 20 6 Q21 10 19.5 12.5 Q17.5 14 14 13.5 Q11.5 13 10.5 11.5 Q12.5 9 11 7 Q9 5 6.5 5.5 Q5 5.8 4 4.5 Z" fill="url(#eg2)"/>
<path d="M6 13 Q6 8 10 7.5 Q12.5 7.8 12.5 10 Q12 13.5 15 14.5 Q18 15 20.3 13 Q19 18.5 13.5 20.3 Q8.5 21 6.5 17 Q6 15 6 13 Z" fill="#1467C0"/>
<circle cx="10" cy="10.3" r="2.3" fill="#2a1818"/></svg>
<!-- explorer -->
<svg style="left:575px;top:691px" width="22" height="20" viewBox="0 0 22 20"><path d="M0.5 2 Q0.5 0.5 2 0.5 H8 L10 2.5 H20 Q21.5 2.5 21.5 4 V18 Q21.5 19.5 20 19.5 H2 Q0.5 19.5 0.5 18 Z" fill="#F7C440"/><path d="M0.5 6 H21.5 V18 Q21.5 19.5 20 19.5 H2 Q0.5 19.5 0.5 18 Z" fill="#FCD856"/><rect x="6" y="14" width="10" height="5.5" rx="1" fill="#1F7FD8"/></svg>
<!-- red app -->
<svg style="left:612px;top:691px" width="21" height="18" viewBox="0 0 21 18"><g stroke-linecap="round" stroke-linejoin="round" fill="none"><path d="M5.5 13.5 L11 3 L16 15 L19 6.5" stroke="#fff" stroke-width="6"/><path d="M2.5 8 L10 11.5 L5 14" stroke="#fff" stroke-width="5.5"/><path d="M5.5 13.5 L11 3 L16 15 L19 6.5" stroke="#F06A7A" stroke-width="3.4"/><path d="M2.5 8 L10 11.5 L5 14" stroke="#2438D8" stroke-width="3"/></g></svg>
<div class="a" style="left:619px;top:714px;width:6px;height:2.5px;background:#9A9090;border-radius:1px"></div>
<!-- slack -->
<svg style="left:649px;top:690px" width="21" height="21" viewBox="0 0 21 21"><circle cx="10.5" cy="10.5" r="10" fill="#fff"/><g stroke-width="2.2" stroke-linecap="round"><path d="M5 8.5 H9" stroke="#36C5F0"/><path d="M8.5 4.5 V5" stroke="#36C5F0"/><path d="M12 5 V9" stroke="#2EB67D"/><path d="M12.5 12 H16.5" stroke="#ECB22E"/><path d="M12.5 16 V16.5" stroke="#ECB22E"/><path d="M9 12.5 V16.5" stroke="#E01E5A"/><path d="M4.5 12.5 H5" stroke="#E01E5A"/></g></svg>
<div class="a" style="left:661px;top:687px;width:11px;height:11px;background:#E0304A;border-radius:50%;box-shadow:0 0 0 1px #3a1c1c"></div>
<div class="t" style="left:664px;top:688.5px;font-size:8.5px;color:#fff">2</div>
<div class="a" style="left:656px;top:714px;width:6px;height:2.5px;background:#9A9090;border-radius:1px"></div>
<!-- github -->
<svg style="left:686px;top:690.5px" width="19" height="19" viewBox="0 0 19 19"><circle cx="9.5" cy="9.5" r="9.3" fill="#8048D0"/><circle cx="9.5" cy="9.5" r="7" fill="#F2EEF8"/><path d="M8 16.3 V13.6 Q5.2 13.2 5.2 10 Q5.2 8.9 6 8 Q5.7 6.9 6.2 5.9 Q7.2 5.9 8.1 6.6 Q9.5 6.2 10.9 6.6 Q11.8 5.9 12.8 5.9 Q13.3 6.9 13 8 Q13.8 8.9 13.8 10 Q13.8 13.2 11 13.6 V16.3 Z" fill="#7A3FC8"/></svg>
<div class="a" style="left:693px;top:714px;width:6px;height:2.5px;background:#9A9090;border-radius:1px"></div>
<!-- pycharm -->
<svg style="left:722px;top:690.5px" width="21" height="20" viewBox="0 0 21 20"><defs><linearGradient id="pcg2" x1="0" y1="0" x2="1" y2="1"><stop offset="0" stop-color="#21D789"/><stop offset="0.55" stop-color="#FCF84A"/><stop offset="1" stop-color="#07C3F2"/></linearGradient></defs><path d="M1.5 3 L13 1 L15 0.5 L14.5 4 L19.5 6 L20 17 L8 19 L1 16.5 Z" fill="url(#pcg2)"/><rect x="4" y="3.5" width="12.5" height="12.5" fill="#0a0a0a"/><text x="5" y="9.8" font-size="6.3" font-weight="bold" fill="#fff" font-family="Liberation Sans">PC</text><rect x="5.2" y="12.5" width="4.5" height="1.2" fill="#fff"/></svg>
<div class="a" style="left:729px;top:714px;width:6px;height:2.5px;background:#9A9090;border-radius:1px"></div>
<!-- python tk active -->
<div class="a" style="left:752.5px;top:684px;width:33px;height:32.5px;background:rgba(255,255,255,0.07);border-radius:4px"></div>
<svg style="left:759px;top:690px" width="22" height="22" viewBox="0 0 22 22"><rect x="1" y="1" width="18" height="15" fill="#454A50"/><rect x="1" y="1" width="18" height="2" fill="#1E88E5"/><rect x="3" y="5" width="5" height="1.2" fill="#5BAA5B"/><rect x="3" y="7.5" width="7" height="1.2" fill="#5BAA5B"/><rect x="3" y="10" width="4" height="1.2" fill="#5BAA5B"/><g transform="translate(7.2 7.5) scale(1.1)"><path d="M6 0.3 C3 0.3 3.2 1.6 3.2 1.6 V3 H6.1 V3.5 H2 C2 3.5 0.2 3.3 0.2 6.1 C0.2 8.9 1.8 8.8 1.8 8.8 H2.8 V7.4 C2.8 7.4 2.7 5.8 4.3 5.8 H7.1 C7.1 5.8 8.7 5.8 8.7 4.3 V1.8 C8.7 1.8 8.9 0.3 6 0.3 Z M6 11.7 C9 11.7 8.8 10.4 8.8 10.4 V9 H5.9 V8.5 H10 C10 8.5 11.8 8.7 11.8 5.9 C11.8 3.1 10.2 3.2 10.2 3.2 H9.2 V4.6 C9.2 4.6 9.3 6.2 7.7 6.2 H4.9 C4.9 6.2 3.3 6.2 3.3 7.7 V10.2 C3.3 10.2 3.1 11.7 6 11.7 Z" fill="none" stroke="#fff" stroke-width="1.4"/><path d="M6 0.3 C3 0.3 3.2 1.6 3.2 1.6 V3 H6.1 V3.5 H2 C2 3.5 0.2 3.3 0.2 6.1 C0.2 8.9 1.8 8.8 1.8 8.8 H2.8 V7.4 C2.8 7.4 2.7 5.8 4.3 5.8 H7.1 C7.1 5.8 8.7 5.8 8.7 4.3 V1.8 C8.7 1.8 8.9 0.3 6 0.3 Z" fill="#3B77A8"/><path d="M6 11.7 C9 11.7 8.8 10.4 8.8 10.4 V9 H5.9 V8.5 H10 C10 8.5 11.8 8.7 11.8 5.9 C11.8 3.1 10.2 3.2 10.2 3.2 H9.2 V4.6 C9.2 4.6 9.3 6.2 7.7 6.2 H4.9 C4.9 6.2 3.3 6.2 3.3 7.7 V10.2 C3.3 10.2 3.1 11.7 6 11.7 Z" fill="#F5C938"/></g></svg>
<div class="a" style="left:762px;top:714px;width:14px;height:2.5px;background:#A8A0A0;border-radius:1px"></div>

<!-- tray -->
<svg style="left:977px;top:697px" width="11" height="7" viewBox="0 0 11 7"><path d="M1 6 L5.5 1.2 L10 6" fill="none" stroke="#E8E8E8" stroke-width="1.3"/></svg>
<svg style="left:1002px;top:696px" width="15" height="10" viewBox="0 0 15 10"><path d="M3.5 9.5 Q0.5 9.5 0.5 7 Q0.5 4.5 3.2 4.5 Q4 1 7.5 1 Q11 1 11.5 4 Q14.5 4 14.5 7 Q14.5 9.5 11.5 9.5 Z" fill="#E0E0E0"/></svg>
<svg style="left:1029px;top:694px" width="16" height="15" viewBox="0 0 16 15"><path d="M3.5 10 Q0.5 10 0.5 7 Q0.5 4.5 3 4.5 Q3.8 0.8 7.5 0.8 Q11 0.8 11.5 4 Q14 4 14 6.5" fill="#2F7FD6"/><path d="M3.5 10 H9 V5 Q5 5 3 5 Q0.5 5 0.5 7.5 Q0.5 10 3.5 10 Z" fill="#2F7FD6"/><circle cx="11" cy="10" r="4.2" fill="#2F7FD6" stroke="#fff" stroke-width="1"/><path d="M11 7.5 V12.5 M8.5 10 H13.5" stroke="#fff" stroke-width="1.2"/></svg>
<div class="tb" style="left:1058.5px;top:689px;font-size:10.4px;letter-spacing:-0.5px">ENG</div>
<div class="tb" style="left:1063px;top:702.3px;font-size:10.4px;letter-spacing:-0.3px">IN</div>
<svg style="left:1093px;top:695px" width="13" height="11" viewBox="0 0 13 11"><g fill="none" stroke="#E8E8E8" stroke-width="1.2"><path d="M0.8 4 Q6.5 -1 12.2 4"/><path d="M2.8 6.2 Q6.5 3 10.2 6.2"/><path d="M4.8 8.3 Q6.5 7 8.2 8.3"/></g><circle cx="6.5" cy="10" r="0.9" fill="#E8E8E8"/></svg>
<svg style="left:1112px;top:694px" width="15" height="13" viewBox="0 0 15 13"><g fill="none" stroke="#E8E8E8" stroke-width="1.2" stroke-linejoin="round"><path d="M0.8 4.5 H3.5 L7 1 V12 L3.5 8.5 H0.8 Z"/><path d="M9 4.5 Q10.2 6.5 9 8.5"/><path d="M11 3 Q13 6.5 11 10"/><path d="M13 1.5 Q15.8 6.5 13 11.5"/></g></svg>
<svg style="left:1132px;top:694px" width="15" height="13" viewBox="0 0 15 13"><g fill="none" stroke="#E8E8E8" stroke-width="1.2"><rect x="0.8" y="3.5" width="11.5" height="8.5" rx="1.5"/><path d="M13.5 6 V9.5"/></g><path d="M5 1 L3 6.5 H6 L4.5 11 L9 5 H6 L7.5 1 Z" fill="#E8E8E8" stroke="#2a1616" stroke-width="0.6"/></svg>
<div class="tb" style="left:1187px;top:689.5px;font-size:10px;letter-spacing:-0.2px">21:56</div>
<div class="tb" style="left:1159px;top:702.5px;font-size:10.1px;letter-spacing:0px">20-06-2024</div>
<svg style="left:1218px;top:694px" width="12" height="13" viewBox="0 0 12 13"><path d="M6 0.8 Q2 0.8 2 5 V8.5 L0.5 10.5 H11.5 L10 8.5 V5 Q10 0.8 6 0.8 Z" fill="#E8E8E8"/><path d="M4.5 11.5 Q6 13 7.5 11.5" fill="#E8E8E8"/></svg>
<svg style="left:1245px;top:691.5px" width="20" height="20" viewBox="0 0 20 20"><path d="M0.8 7 Q0.8 0.8 7 0.8 H11 Q15 0.8 16 4.5 L16 7 Z" fill="#2C86E8"/><path d="M9 0.8 H11 Q15 0.8 16 4.5 L16 7 H9 Z" fill="#1F5ED8"/><rect x="0.8" y="6" width="8" height="4" fill="#5CC46A"/><path d="M0.8 9.5 H8.8 V14 H4 Q0.8 14 0.8 11 Z" fill="#F3C52E"/><rect x="0.8" y="9.2" width="8" height="0.9" fill="#A8E060"/><path d="M9 6 H16 Q18.3 6 18.3 8.5 V14 H9 Z" fill="#E56BAE"/><path d="M12.5 6 H16 Q18.3 6 18.3 8.5 V10.5 H12.5 Z" fill="#A665E6"/><path d="M10 5.5 L8 13" stroke="#111" stroke-width="1.1"/><rect x="4.5" y="13.3" width="14" height="6" rx="1.8" fill="#F5C630"/><text x="6" y="18.2" font-size="4.6" font-weight="bold" fill="#3a2a10" font-family="Liberation Sans">PRE</text></svg>
<!-- ===== Tk window ===== -->
<div class="a" style="left:70px;top:112px;width:336px;height:287px;border-radius:34px;background:rgba(0,0,0,0.21);filter:blur(7px)"></div>
<div class="a" style="left:93.5px;top:87.5px;width:288.5px;height:264.2px;border-radius:7px 7px 5px 5px;box-shadow:0 6px 14px 2px rgba(0,0,0,0.28),0 0 0 1px rgba(0,0,0,0.2)"></div>
<div class="a" style="left:93.5px;top:87.5px;width:288.5px;height:264.2px;background:#F0F0F0;border-radius:7px 7px 5px 5px;overflow:hidden">
  <div class="a" style="left:0;top:0;width:289px;height:24.5px;background:#F8EFED"></div>
  <div class="a" style="left:249.5px;top:0;width:39px;height:24.5px;background:#F3DCD7"></div>
</div>
<svg style="left:102px;top:92px" width="10" height="15" viewBox="0 0 10 15"><defs><linearGradient id="fg" x1="0" y1="0" x2="1" y2="0"><stop offset="0" stop-color="#2B4F9A"/><stop offset="0.5" stop-color="#4D8BE0"/><stop offset="1" stop-color="#9CC4F5"/></linearGradient></defs><path d="M2 12.5 Q1 8.5 3.5 5 Q6 1.5 9 0.8 Q9 5 6.8 8.5 Q4.8 11.5 2 12.5 Z" fill="url(#fg)" stroke="#222a3a" stroke-width="0.6"/><path d="M2.2 12.3 L1.3 14.3" stroke="#111" stroke-width="1.2"/><path d="M2.5 12 Q5 7 8.3 2" stroke="#1a2a4a" stroke-width="0.5" fill="none"/></svg>
<div class="t" style="left:117.5px;top:94.8px;font-size:11.2px;color:#1a1a1a;letter-spacing:-0.6px">To-Do List</div>
<div class="a" style="left:280px;top:99.3px;width:8.5px;height:1px;background:#333"></div>
<div class="a" style="left:319px;top:96px;width:8.5px;height:8.5px;border:1.1px solid #1a1a1a;border-radius:1.2px"></div>
<svg style="left:357.5px;top:95.5px" width="10" height="10" viewBox="0 0 10 10"><path d="M1 1 L9 9 M9 1 L1 9" stroke="#222" stroke-width="0.95"/></svg>

<div class="a" style="left:104px;top:113.5px;width:252px;height:135px;background:#fff;border-top:1px solid #A6A6A6;border-left:1px solid #A6A6A6;border-right:1px solid #F0F0F0"></div>
<svg style="left:360px;top:116.5px" width="9" height="6" viewBox="0 0 9 6"><path d="M0.5 5.5 L4.5 0.5 L8.5 5.5 Z" fill="#A3A3A3"/></svg>
<svg style="left:360px;top:239.5px" width="9" height="6" viewBox="0 0 9 6"><path d="M0.5 0.5 L4.5 5.5 L8.5 0.5 Z" fill="#A3A3A3"/></svg>
<div class="a" style="left:111px;top:249.5px;width:253px;height:16px;background:#fff;border-top:1px solid #A6A6A6;border-left:1px solid #A6A6A6"></div>

<div class="btn" style="top:266px;height:19.5px">Add task</div>
<div class="btn" style="top:287px;height:20.3px">Delete task</div>
<div class="btn" style="top:308.8px;height:20.3px">Load tasks</div>
<div class="btn" style="top:330.6px;height:21px;border-radius:0 0 5px 5px;border-bottom:1px solid #9a9a9a">Save tasks</div>
<div class="a" style="left:94px;top:285.5px;width:287.5px;height:1.8px;background:#7C7C7C"></div>
<div class="a" style="left:94px;top:307.3px;width:287.5px;height:1.8px;background:#7C7C7C"></div>
<div class="a" style="left:94px;top:329.1px;width:287.5px;height:1.8px;background:#7C7C7C"></div>
</body></html>
